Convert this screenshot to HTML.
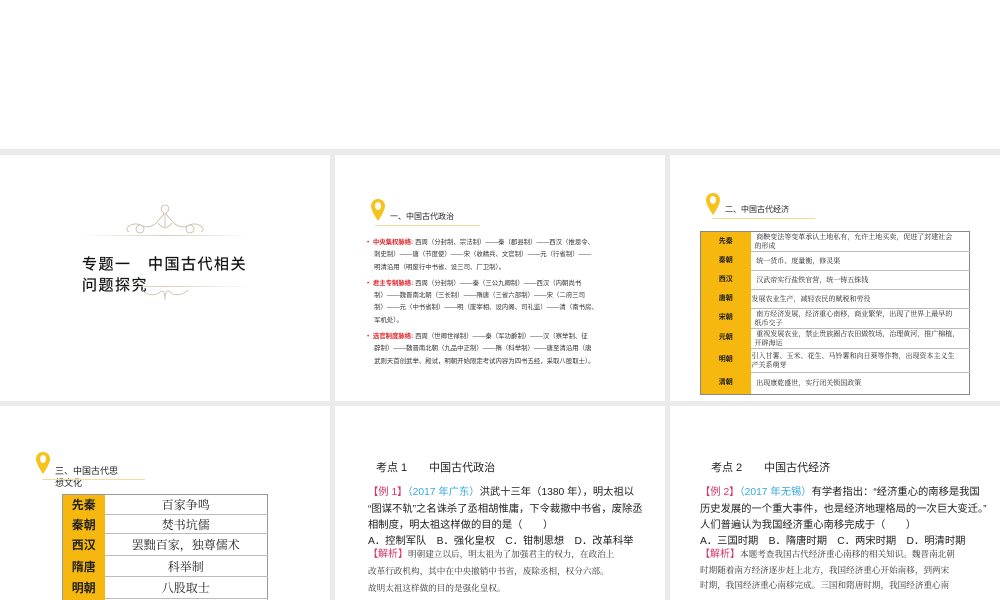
<!DOCTYPE html>
<html><head><meta charset="utf-8"><style>
*{margin:0;padding:0;box-sizing:border-box}
body{width:1000px;height:600px;overflow:hidden;background:#ebebeb;position:relative;font-family:"Liberation Sans","Noto Sans CJK SC",sans-serif;color:#222}
.s{position:absolute;background:#fff;overflow:hidden}
.a{position:absolute;white-space:nowrap}
.pin{position:absolute;width:14px;height:22px}
.red{color:#e0282e;font-weight:bold}
table{border-collapse:collapse;position:absolute}
.serif{font-family:"Liberation Serif","Noto Serif CJK SC",serif}
.h{background:#f6b80f;text-align:center;font-weight:bold;font-family:"Liberation Sans","Noto Sans CJK SC",sans-serif}
</style></head><body>
<div class="s" style="left:0;top:0;width:1000px;height:149px"></div>
<!-- slide1 -->
<div class="s" style="left:0;top:155px;width:330px;height:246px">
 <svg class="a" style="left:120px;top:48px" width="90" height="36" viewBox="0 0 90 36" fill="none" stroke="#c9b9a6" stroke-width="0.8">
  <path d="M45 2c-4 0-5 5-2 7s-3 6-6 10-10 6-14 4-8-3-12-1-6 5-2 7"/><path d="M45 2c4 0 5 5 2 7s3 6 6 10 10 6 14 4 8-3 12-1 6 5 2 7"/>
  <path d="M45 10v14M38 20c3 4 7 5 7 5s4-1 7-5"/><circle cx="20" cy="26" r="4"/><circle cx="70" cy="26" r="4"/>
 </svg>
 <div class="a" style="left:80px;top:80px;width:172px;height:1px;background:linear-gradient(90deg,transparent,#d8cdbf,transparent)"></div>
 <div class="a" style="left:82px;top:99px;font-size:15px;line-height:21px;color:#111;letter-spacing:1.5px;-webkit-text-stroke:0.2px #111">专题一　中国古代相关<br>问题探究</div>
 <div class="a" style="left:80px;top:131px;width:172px;height:1px;background:linear-gradient(90deg,transparent,#d8cdbf,transparent)"></div>
 <svg class="a" style="left:140px;top:132px" width="50" height="14" viewBox="0 0 50 14" fill="none" stroke="#c9b9a6" stroke-width="0.8"><path d="M2 3c6 6 14 6 18 2s5 4 5 8M48 3c-6 6-14 6-18 2s-5 4-5 8"/></svg>
</div>
<!-- slide2 -->
<div class="s" style="left:335px;top:155px;width:330px;height:246px">
 <svg class="pin" style="left:36px;top:44px" viewBox="0 0 14 22"><path d="M7 0C3 0 0 3 0 7c0 5 7 15 7 15s7-10 7-15C14 3 11 0 7 0z" fill="#f6c21c"/><ellipse cx="7" cy="7" rx="3" ry="4" fill="#fff"/></svg>
 <div class="a" style="left:55px;top:56px;font-size:8px">一、中国古代政治</div>
 <div class="a" style="left:40px;top:70px;width:105px;height:1px;background:#f4dc9a"></div>
 <div class="a" style="left:32px;top:82px;font-size:6.4px;line-height:12.3px;color:#333">
  <span style="color:#e0282e">•</span>&nbsp; <span class="red">中央集权脉络:</span> 西周（分封制、宗法制）——秦（郡县制）——西汉（推恩令、<br>&nbsp;&nbsp;&nbsp; 刺史制）——唐（节度使）——宋（收精兵、文官制）——元（行省制）——<br>&nbsp;&nbsp;&nbsp; 明清沿用（明废行中书省、设三司、厂卫制）。
  <div style="height:4px"></div>
  <span style="color:#e0282e">•</span>&nbsp; <span class="red">君主专制脉络:</span> 西周（分封制）——秦（三公九卿制）——西汉（内朝尚书<br>&nbsp;&nbsp;&nbsp; 制）——魏晋南北朝（三长制）——隋唐（三省六部制）——宋（二府三司<br>&nbsp;&nbsp;&nbsp; 制）——元（中书省制）——明（废宰相、设内阁、司礼监）——清（南书房、<br>&nbsp;&nbsp;&nbsp; 军机处）。
  <div style="height:4px"></div>
  <span style="color:#e0282e">•</span>&nbsp; <span class="red">选官制度脉络:</span> 西周（世卿世禄制）——秦（军功爵制）——汉（察举制、征<br>&nbsp;&nbsp;&nbsp; 辟制）——魏晋南北朝（九品中正制）——隋（科举制）——唐至清沿用（唐<br>&nbsp;&nbsp;&nbsp; 武则天首创武举、殿试，明朝开始限定考试内容为四书五经，采取八股取士）。
 </div>
</div>
<!-- slide3 -->
<div class="s" style="left:670px;top:155px;width:330px;height:246px">
 <svg class="pin" style="left:36px;top:38px" viewBox="0 0 14 22"><path d="M7 0C3 0 0 3 0 7c0 5 7 15 7 15s7-10 7-15C14 3 11 0 7 0z" fill="#f6c21c"/><ellipse cx="7" cy="7" rx="3" ry="4" fill="#fff"/></svg>
 <div class="a" style="left:55px;top:49px;font-size:8px">二、中国古代经济</div>
 <div class="a" style="left:42px;top:63px;width:103px;height:1px;background:#f4dc9a"></div>
 <table class="serif" style="left:30px;top:76px;width:270px;font-size:7px;line-height:8.5px;border:1px solid #888">
  <colgroup><col style="width:50px"><col></colgroup>
  <tr style="height:20px"><td class="h">先秦</td><td style="padding-left:4px">&nbsp;商鞅变法等变革承认土地私有，允许土地买卖，促进了封建社会<br>的形成</td></tr>
  <tr style="height:19px"><td class="h">秦朝</td><td style="padding-left:4px;border-top:1px solid #bbb">&nbsp;统一货币、度量衡，修灵渠</td></tr>
  <tr style="height:19px"><td class="h">西汉</td><td style="padding-left:4px;border-top:1px solid #bbb">&nbsp;汉武帝实行盐铁官营，统一铸五铢钱</td></tr>
  <tr style="height:19px"><td class="h">唐朝</td><td style="padding-left:1px;border-top:1px solid #bbb">发展农业生产，减轻农民的赋税和劳役</td></tr>
  <tr style="height:20px"><td class="h">宋朝</td><td style="padding-left:4px;border-top:1px solid #bbb">&nbsp;南方经济发展，经济重心南移，商业繁荣，出现了世界上最早的<br>纸币交子</td></tr>
  <tr style="height:20px"><td class="h">元朝</td><td style="padding-left:4px;border-top:1px solid #bbb">&nbsp;重视发展农业，禁止贵族圈占农田做牧场，治理黄河，推广棉植，<br>开辟海运</td></tr>
  <tr style="height:24px"><td class="h">明朝</td><td style="padding-left:1px;border-top:1px solid #bbb">引入甘薯、玉米、花生、马铃薯和向日葵等作物，出现资本主义生<br>产关系萌芽</td></tr>
  <tr style="height:22px"><td class="h">清朝</td><td style="padding-left:4px;border-top:1px solid #bbb">&nbsp;出现康乾盛世，实行闭关锁国政策</td></tr>
 </table>
</div>
<!-- slide4 -->
<div class="s" style="left:0;top:406px;width:330px;height:194px">
 <svg class="pin" style="left:36px;top:46px" viewBox="0 0 14 22"><path d="M7 0C3 0 0 3 0 7c0 5 7 15 7 15s7-10 7-15C14 3 11 0 7 0z" fill="#f6c21c"/><ellipse cx="7" cy="7" rx="3" ry="4" fill="#fff"/></svg>
 <div class="a" style="left:55px;top:59px;font-size:9px;line-height:12px">三、中国古代思<br>想文化</div>
 <div class="a" style="left:42px;top:73px;width:103px;height:1px;background:#f4dc9a"></div>
 <table style="left:62px;top:88px;width:206px;font-size:12px;border:1px solid #999">
  <colgroup><col style="width:42px"><col></colgroup>
  <tr style="height:20px"><td class="h">先秦</td><td class="serif" style="text-align:center;border-bottom:1px solid #bbb">百家争鸣</td></tr>
  <tr style="height:19px"><td class="h">秦朝</td><td class="serif" style="text-align:center;border-bottom:1px solid #bbb">焚书坑儒</td></tr>
  <tr style="height:22px"><td class="h">西汉</td><td class="serif" style="text-align:center;border-bottom:1px solid #bbb">罢黜百家，独尊儒术</td></tr>
  <tr style="height:21px"><td class="h">隋唐</td><td class="serif" style="text-align:center;border-bottom:1px solid #bbb">科举制</td></tr>
  <tr style="height:22px"><td class="h">明朝</td><td class="serif" style="text-align:center;border-bottom:1px solid #bbb">八股取士</td></tr>
  <tr style="height:20px"><td class="h"></td><td></td></tr>
 </table>
</div>
<!-- slide5 -->
<div class="s" style="left:335px;top:406px;width:330px;height:194px">
 <div class="a" style="left:41px;top:53px;font-size:11px">考点 1　　中国古代政治</div>
 <div class="a" style="left:33px;top:79px;font-size:10.3px;line-height:16.5px;color:#222">
  <span style="color:#d6336c">【例 1】</span><span style="color:#36a9e1">（2017 年广东）</span>洪武十三年（1380 年），明太祖以<br>
  “图谋不轨”之名诛杀了丞相胡惟庸，下令裁撤中书省，废除丞<br>相制度，明太祖这样做的目的是（　　）
 </div>
 <div class="a" style="left:33px;top:129px;font-size:10.3px;line-height:14px;color:#222">A．控制军队　B．强化皇权　C．钳制思想　D．改革科举</div>
 <div class="a serif" style="left:33px;top:140px;font-size:8.6px;line-height:17px;color:#333">
  <span style="color:#d6336c;font-family:'Liberation Sans','Noto Sans CJK SC',sans-serif;font-size:10px">【解析】</span>明朝建立以后，明太祖为了加强君主的权力，在政治上<br>改革行政机构，其中在中央撤销中书省，废除丞相，权分六部。<br>故明太祖这样做的目的是强化皇权。<br><span style="color:#d6336c">【答案】</span>
 </div>
</div>
<!-- slide6 -->
<div class="s" style="left:670px;top:406px;width:330px;height:194px">
 <div class="a" style="left:41px;top:53px;font-size:11px">考点 2　　中国古代经济</div>
 <div class="a" style="left:30px;top:79px;font-size:10.3px;line-height:16.5px;color:#222">
  <span style="color:#d6336c">【例 2】</span><span style="color:#36a9e1">（2017 年无锡）</span>有学者指出：“经济重心的南移是我国<br>
  历史发展的一个重大事件，也是经济地理格局的一次巨大变迁。”<br>人们普遍认为我国经济重心南移完成于（　　）
 </div>
 <div class="a" style="left:30px;top:129px;font-size:10.3px;line-height:14px;color:#222">A．三国时期　B．隋唐时期　C．两宋时期　D．明清时期</div>
 <div class="a serif" style="left:30px;top:141px;font-size:8.6px;line-height:15.5px;color:#333">
  <span style="color:#d6336c;font-family:'Liberation Sans','Noto Sans CJK SC',sans-serif;font-size:10px">【解析】</span>本题考查我国古代经济重心南移的相关知识。魏晋南北朝<br>时期随着南方经济逐步赶上北方，我国经济重心开始南移，到两宋<br>时期，我国经济重心南移完成。三国和隋唐时期，我国经济重心南
 </div>
</div>
</body></html>
